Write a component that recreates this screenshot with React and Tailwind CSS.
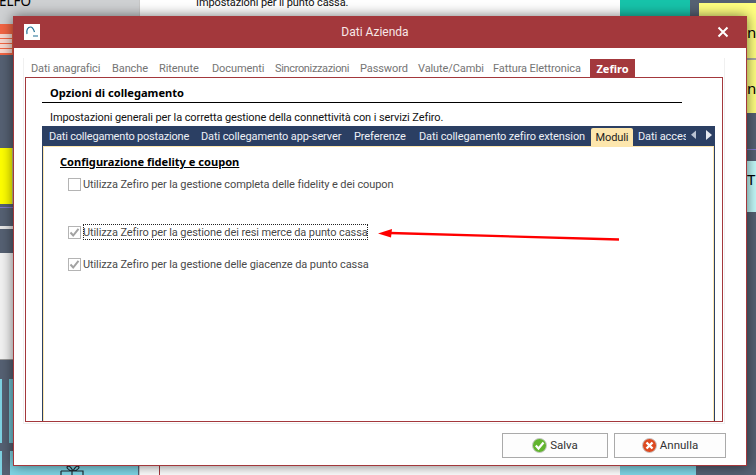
import React from "react";

const topTabs = [
  ["Dati anagrafici", "w-[81px]"],
  ["Banche", "w-[47px]"],
  ["Ritenute", "w-[53px]"],
  ["Documenti", "w-[63px]"],
  ["Sincronizzazioni", "w-[85px] tracking-[-0.35px]"],
  ["Password", "w-[58px]"],
  ["Valute/Cambi", "w-[75px]"],
  ["Fattura Elettronica", "w-[97px]"],
];
const subTabs = [
  ["Dati collegamento postazione", "w-[152px] tracking-[-0.2px]"],
  ["Dati collegamento app-server", "w-[153px]"],
  ["Preferenze", "w-[65px]"],
  ["Dati collegamento zefiro extension", "w-[172px]"],
];

function Check({ checked, label, focus, className }) {
  return (
    <div className={"flex items-center h-[16px] " + className}>
      <span className="w-[13px] h-[13px] border border-[#b4b4b4] bg-white flex items-center justify-center shrink-0">
        {checked && (
          <svg width="11" height="11" viewBox="0 0 11 11">
            <path d="M1.5 5.5 L4.2 8.5 L9.5 1.8" fill="none" stroke="#a2a2a2" strokeWidth="2" />
          </svg>
        )}
      </span>
      <span className={"ml-[2px] h-[16px] leading-[17px] whitespace-nowrap text-[#4a4a4a] " + (focus ? "outline outline-1 outline-dotted outline-[#222] -outline-offset-1" : "")}>
        {label}
      </span>
    </div>
  );
}

export default function App() {
  return (
    <div className="relative w-[756px] h-[475px] overflow-hidden bg-[#566173] text-[11px] tracking-[-0.1px] font-['Roboto','Liberation_Sans',sans-serif]">
      {/* Application behind the dialog */}
      <div className="absolute left-0 top-0 w-[139px] h-[24px] bg-[#cfd1d3] overflow-hidden">
        <span className="absolute left-[-1px] top-[-6px] text-[13.5px] leading-[15px] tracking-normal text-black font-['Noto_Sans',sans-serif]">ELFO</span>
      </div>
      <div className="absolute left-0 top-[24px] w-[13px] h-[31px] bg-[#f26544]">
        <div className="mt-[10px] w-[12px] h-[19px] bg-[#f7d8cf] flex flex-col justify-around py-[2px]">
          <div className="h-px bg-[#f26544]" />
          <div className="h-px bg-[#f26544]" />
          <div className="h-px bg-[#f26544]" />
        </div>
      </div>
      <div className="absolute left-0 top-[148px] w-[13px] h-[56px] bg-[#ffff00] border-r border-[#c5c58a]" />
      <div className="absolute left-0 top-[207px] w-[13px] h-px bg-[#7d78c9]" />
      <div className="absolute left-0 top-[226px] w-[13px] h-[3px] bg-[#e8e8e8]" />
      <div className="absolute left-0 top-[253px] w-[13px] h-[107px] bg-[#f2f2f2] border-b border-[#9a9a9a]" />
      <div className="absolute left-0 top-[379px] w-[2px] h-[64px] bg-[#7fd3e3]" />
      <div className="absolute left-[9px] top-[379px] w-[4px] h-[64px] bg-[#6fc0d0]" />
      <div className="absolute left-0 top-[451px] w-[2px] h-[24px] bg-[#7fd3e3]" />
      <div className="absolute left-[10px] top-[451px] w-[128px] h-[24px] bg-[#7fd5e5]">
        <svg className="absolute left-[50px] top-[14px]" width="26" height="12" viewBox="0 0 26 12" fill="none" stroke="#1e2a33" strokeWidth="1.2">
          <path d="M1 6h22v6M1 6v6M12 6v6M8 1c2 0 4 3 5 5M18 1c-2 0-4 3-5 5M8 1c-2 1-1 4 5 5M18 1c2 1 1 4-5 5" />
        </svg>
      </div>
      <div className="absolute left-[139px] top-0 w-[481px] h-[475px] bg-white border-l border-[#c8c8c8]">
        <span className="absolute left-[56px] top-[-5px] text-[#111] leading-[16px] whitespace-nowrap">Impostazioni per il punto cassa.</span>
        <div className="absolute left-[19px] top-[465px] w-px h-[10px] bg-[#a3383c]" />
      </div>
      <div className="absolute left-[620px] top-0 w-[70px] h-[16px] bg-[#17c4aa]" />
      <div className="absolute left-[620px] top-[465px] w-[76px] h-[10px] bg-[#7fd5e5]" />
      <div className="absolute left-[699px] top-[3px] w-[57px] h-[110px] bg-[#ffff80] text-black text-[15px] tracking-normal font-['Noto_Sans',sans-serif]">
        <div className="absolute left-0 top-[55px] w-full h-[2px] bg-[#a9a9a0]" />
        <span className="absolute left-[48px] top-[21px] leading-[16px]">ne</span>
        <span className="absolute left-[48px] top-[77px] leading-[16px]">n</span>
      </div>
      <div className="absolute left-[747px] top-[149px] w-[9px] h-px bg-[#7d78c9]" />
      <div className="absolute left-[747px] top-[161px] w-[9px] h-[51px] bg-[#c2fafa] pt-[9px] text-black text-[15px] leading-[18px] tracking-normal font-['Noto_Sans',sans-serif]">T</div>

      {/* Dialog window */}
      <div className="absolute left-[13px] top-[16px] w-[734px] h-[450px] bg-white border border-[#a3383c] border-t-0 shadow-[0_0_12px_rgba(0,0,0,0.55)] flex flex-col">
        <div className="relative h-[32px] bg-[#a3383c] shrink-0 -mx-px flex items-center justify-center pr-[10px]">
          <div className="absolute left-[11px] top-[8px] w-[16px] h-[16px] bg-white flex items-center justify-center">
            <svg width="14" height="14" viewBox="0 0 14 14" fill="none" stroke="#1d6f93" strokeWidth="1.2">
              <path d="M2 9C1 5 3 2 5.5 2c2 0 3 2 4 5M5 6h.01M8 11h5" />
            </svg>
          </div>
          <span className="text-[12px] tracking-normal text-[#f7e7e7]">Dati Azienda</span>
          <svg className="absolute right-[18px] top-[10px]" width="12" height="12" viewBox="0 0 12 12">
            <path d="M1.5 1.5 L10.5 10.5 M10.5 1.5 L1.5 10.5" stroke="#fff" strokeWidth="2" />
          </svg>
        </div>

        {/* Tabbed page */}
        <div className="mt-[10px] ml-[9px] w-[702px] h-[366px] border border-t-0 border-[#f0f0f0] px-[1px] pb-[1px] flex flex-col shrink-0">
          <div className="h-[19px] flex items-end pl-[6px] text-[#747474] shrink-0">
            {topTabs.map(([t, w]) => (
              <span key={t} className={"h-[19px] leading-[21px] whitespace-nowrap " + w}>{t}</span>
            ))}
            <span className="h-[18px] w-[45px] bg-[#a3383c] text-white font-['Noto_Sans',sans-serif] font-bold text-[11px] tracking-normal text-center leading-[19px]">Zefiro</span>
          </div>
          <div className="flex-1 min-h-0 border border-[#a3383c] pl-[16px] flex flex-col">
            <div className="mt-[7px] ml-[8px] w-[632px] font-['Noto_Sans',sans-serif] font-bold text-[11.1px] tracking-normal text-black leading-[16px]">Opzioni di collegamento</div>
            <div className="mt-[1px] w-[640px] h-px bg-black shrink-0" />
            <div className="mt-[7px] ml-[8px] text-[#111] leading-[15px] whitespace-nowrap">Impostazioni generali per la corretta gestione della connettività con i servizi Zefiro.</div>
            <div className="mt-[1px] w-[673px] h-[20px] bg-[#2b3f63] flex items-end pl-[7px] text-[#eef1f7] shrink-0 relative">
              {subTabs.map(([t, w]) => (
                <span key={t} className={"h-[20px] leading-[22px] whitespace-nowrap " + w}>{t}</span>
              ))}
              <span className="h-[18px] w-[42px] bg-[#fde6ad] text-[#222] text-center leading-[19px] rounded-t-[2px]">Moduli</span>
              <span className="ml-[5px] w-[48px] h-[20px] leading-[22px] overflow-hidden whitespace-nowrap">Dati accesso</span>
              <svg className="absolute left-[648px] top-[4px]" width="24" height="11" viewBox="0 0 24 11">
                <path d="M6 0.5 V9 L1 4.8Z" fill="#b9c2d2" />
                <path d="M16 0 V10 L22 5Z" fill="#e4e8ef" />
              </svg>
            </div>
            <div className="flex-1 min-h-0 w-[673px] border-l border-r border-[#2b3f63]">
              <div className="h-full border-l border-r border-t border-[#fde6ad] flex flex-col pl-[16px] relative">
                <div className="mt-[7px] font-['Noto_Sans',sans-serif] font-bold text-[11.1px] tracking-normal text-black underline leading-[16px]">Configurazione fidelity e coupon</div>
                <Check className="ml-[8px] mt-[6px]" label="Utilizza Zefiro per la gestione completa delle fidelity e dei coupon" />
                <Check className="ml-[8px] mt-[32px]" checked focus label="Utilizza Zefiro per la gestione dei resi merce da punto cassa" />
                <Check className="ml-[8px] mt-[16px]" checked label="Utilizza Zefiro per la gestione delle giacenze da punto cassa" />
              </div>
            </div>
          </div>
        </div>

        {/* Buttons */}
        <div className="mt-[9px] mr-[20px] flex justify-end gap-[6px]">
          <button className="w-[106px] h-[25px] border border-[#aaaaaa] bg-[#fdfdfd] flex items-center justify-center gap-[3px] text-[#333] text-[11.5px] tracking-normal">
            <svg width="15" height="15" viewBox="0 0 15 15">
              <circle cx="7.5" cy="7.5" r="7" fill="#62b52f" stroke="#c9c9c9" />
              <path d="M3.8 7.5 L6.5 10.5 L11.5 4.5" fill="none" stroke="#fff" strokeWidth="2.2" />
            </svg>
            Salva
          </button>
          <button className="w-[112px] h-[25px] border border-[#aaaaaa] bg-[#fdfdfd] flex items-center justify-center gap-[3px] text-[#333] text-[11.5px] tracking-normal">
            <svg width="15" height="15" viewBox="0 0 15 15">
              <circle cx="7.5" cy="7.5" r="7" fill="#dd4a21" stroke="#c9c9c9" />
              <path d="M4.5 4.5 L10.5 10.5 M10.5 4.5 L4.5 10.5" fill="none" stroke="#fff" strokeWidth="2.4" />
            </svg>
            Annulla
          </button>
        </div>
      </div>

      {/* Annotation arrow */}
      <svg className="absolute left-[370px] top-[225px]" width="260" height="20" viewBox="0 0 260 20">
        <path d="M20 8 L249 14.5" stroke="#ff0000" strokeWidth="2.4" fill="none" />
        <path d="M8 8.5 L22 4 L21 12.5Z" fill="#ff0000" />
      </svg>
    </div>
  );
}
